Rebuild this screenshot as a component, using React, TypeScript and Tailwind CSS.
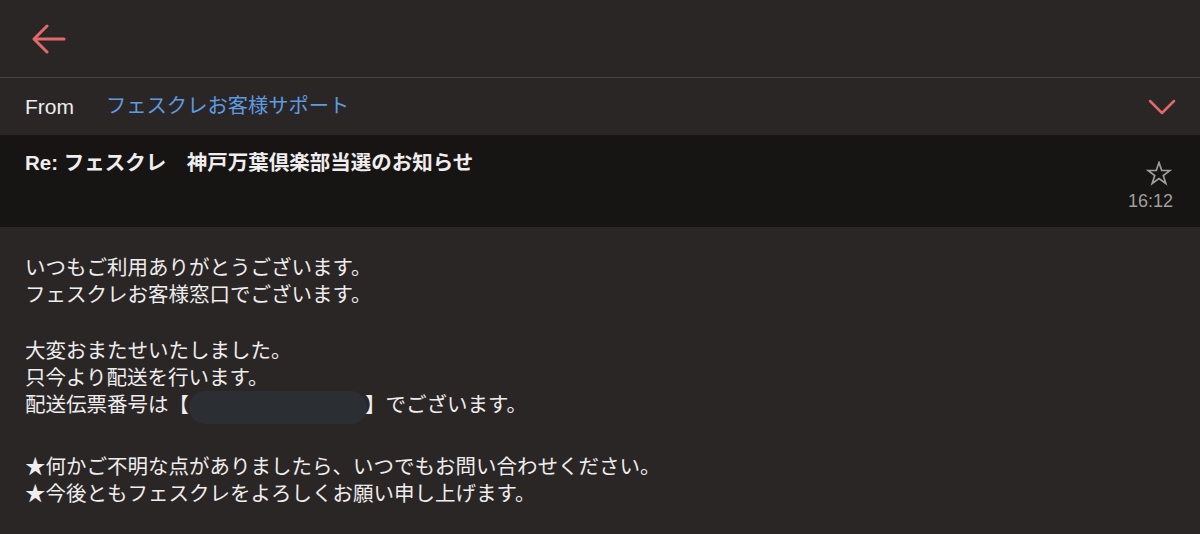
import React from 'react';

const jp = { fontFamily: '"Liberation Sans", "Noto Sans CJK JP", sans-serif' };

const App: React.FC = () => {
  return (
    <div className="w-[1200px] h-[534px] overflow-hidden bg-[#2a2626] text-[#efeded]" style={jp}>
      {/* top bar */}
      <div className="h-[78px] border-b border-[#464242] flex items-center px-[32px]">
        <svg width="34" height="30" viewBox="0 0 34 30" fill="none" stroke="#e2696a" strokeWidth="3" strokeLinecap="round" strokeLinejoin="round">
          <path d="M32 15H3" />
          <path d="M15 2L2 15l13 13" />
        </svg>
      </div>

      {/* from row */}
      <div className="h-[57px] flex items-center pl-[25px] pr-[24px]">
        <span className="text-[21px] w-[81px]">From</span>
        <span className="text-[20.3px] text-[#5e9be0]">フェスクレお客様サポート</span>
        <svg className="ml-auto" width="28" height="16" viewBox="0 0 28 16" fill="none" stroke="#e2696a" strokeWidth="2.5" strokeLinecap="round" strokeLinejoin="round">
          <path d="M2 2l12 12L26 2" />
        </svg>
      </div>

      {/* subject */}
      <div className="h-[92px] bg-[#171414] flex justify-between pl-[25px] pr-[27px] pt-[15px]">
        <div className="text-[20.5px] font-bold leading-[26px]">Re: フェスクレ　神戸万葉倶楽部当選のお知らせ</div>
        <div className="flex flex-col items-end pt-[11px]">
          <svg className="mr-[1px]" width="26" height="25" viewBox="0 0 24 24" fill="none" stroke="#a19e9e" strokeWidth="1.6" strokeLinejoin="miter">
            <path d="M12 1.5l2.6 7.6h8l-6.5 4.8 2.5 7.7L12 16.9l-6.6 4.7 2.5-7.7L1.4 9.1h8z" />
          </svg>
          <span className="text-[18px] text-[#a19e9e] leading-[22px] mt-[4px]">16:12</span>
        </div>
      </div>

      {/* body */}
      <div className="pl-[25px] pt-[28px] text-[20.5px] leading-[26.5px] flex flex-col gap-[30px]">
        <div>
          <p>いつもご利用ありがとうございます。</p>
          <p>フェスクレお客様窓口でございます。</p>
        </div>
        <div>
          <p>大変おまたせいたしました。</p>
          <p>只今より配送を行います。</p>
          <p className="whitespace-nowrap">
            配送伝票番号は【<span className="inline-block w-[178px] h-[33px] rounded-full bg-[#2b2e33] ml-0 mr-[-2px] align-[-12px]"></span>】でございます。
          </p>
        </div>
        <div>
          <p>★何かご不明な点がありましたら、いつでもお問い合わせください。</p>
          <p>★今後ともフェスクレをよろしくお願い申し上げます。</p>
        </div>
      </div>
    </div>
  );
};

export default App;
